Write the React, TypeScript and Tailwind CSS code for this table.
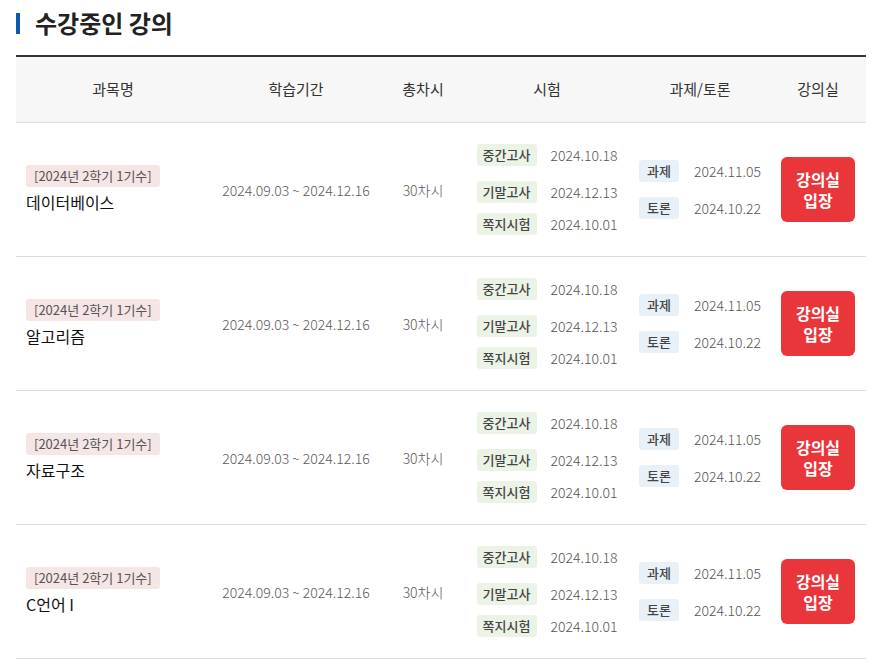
import React from "react";

const courses = ["데이터베이스", "알고리즘", "자료구조", "C언어 I"];

const font = { fontFamily: '"Noto Sans CJK KR", "Noto Sans", sans-serif' };

function Row({ name }: { name: string }) {
  return (
    <div className="grid grid-cols-[194px_172px_82px_166px_140px_96px] h-[134px] border-b border-[#dddddd] items-center">
      <div className="pl-[10px] flex flex-col items-start">
        <span className="inline-block bg-[#f6e5e5] text-[#555555] text-[13px] leading-[22px] h-[22px] px-[8px] rounded-[3px]">
          [2024년 2학기 1기수]
        </span>
        <span className="mt-[3px] text-[16px] leading-[24px] text-[#111111]">{name}</span>
      </div>
      <div className="text-center text-[14px] font-light text-[#5a5a5a] leading-[20px]">2024.09.03 ~ 2024.12.16</div>
      <div className="text-center text-[14px] font-light text-[#5a5a5a] leading-[20px]">30차시</div>
      <div className="flex flex-col items-center">
        <div className="flex flex-col">
          {[
            ["중간고사", "2024.10.18", ""],
            ["기말고사", "2024.12.13", "mt-[15px]"],
            ["쪽지시험", "2024.10.01", "mt-[10px]"],
          ].map(([b, d, m]) => (
            <div key={b} className={`flex items-center ${m}`}>
              <span className="w-[60px] h-[22px] leading-[22px] text-center text-[13px] font-medium text-[#444444] bg-[#ebf3e6] rounded-[3px]">
                {b}
              </span>
              <span className="ml-[14px] text-[14px] font-light text-[#555555] leading-[20px]">{d}</span>
            </div>
          ))}
        </div>
      </div>
      <div className="flex flex-col items-center">
        <div className="flex flex-col">
          {[
            ["과제", "2024.11.05", ""],
            ["토론", "2024.10.22", "mt-[15px]"],
          ].map(([b, d, m]) => (
            <div key={b} className={`flex items-center ${m}`}>
              <span className="w-[40px] h-[22px] leading-[22px] text-center text-[13px] font-medium text-[#444444] bg-[#e8f0f8] rounded-[3px]">
                {b}
              </span>
              <span className="ml-[15px] text-[14px] font-light text-[#555555] leading-[20px]">{d}</span>
            </div>
          ))}
        </div>
      </div>
      <div className="flex justify-center">
        <button className="w-[74px] h-[65px] rounded-[6px] bg-[#e8363b] text-white font-bold text-[16px] leading-[21px] text-center">
          강의실
          <br />
          입장
        </button>
      </div>
    </div>
  );
}

export default function App() {
  return (
    <div className="bg-white min-h-[670px] pl-[16px] pr-[10px] pt-[8px]" style={font}>
      <div className="flex items-center">
        <span className="w-[4px] h-[21px] bg-[#0b5cad]" />
        <h2 className="ml-[15px] text-[24px] leading-[30px] font-bold text-[#222222]">수강중인 강의</h2>
      </div>
      <div className="mt-[17px] border-t-2 border-[#333333]">
        <div className="grid grid-cols-[194px_172px_82px_166px_140px_96px] h-[66px] bg-[#f7f7f7] border-b border-[#dddddd] items-center text-[15px] text-[#333333]">
          <div className="text-center">과목명</div>
          <div className="text-center">학습기간</div>
          <div className="text-center">총차시</div>
          <div className="text-center">시험</div>
          <div className="text-center">과제/토론</div>
          <div className="text-center">강의실</div>
        </div>
        {courses.map((c) => (
          <Row key={c} name={c} />
        ))}
      </div>
    </div>
  );
}
